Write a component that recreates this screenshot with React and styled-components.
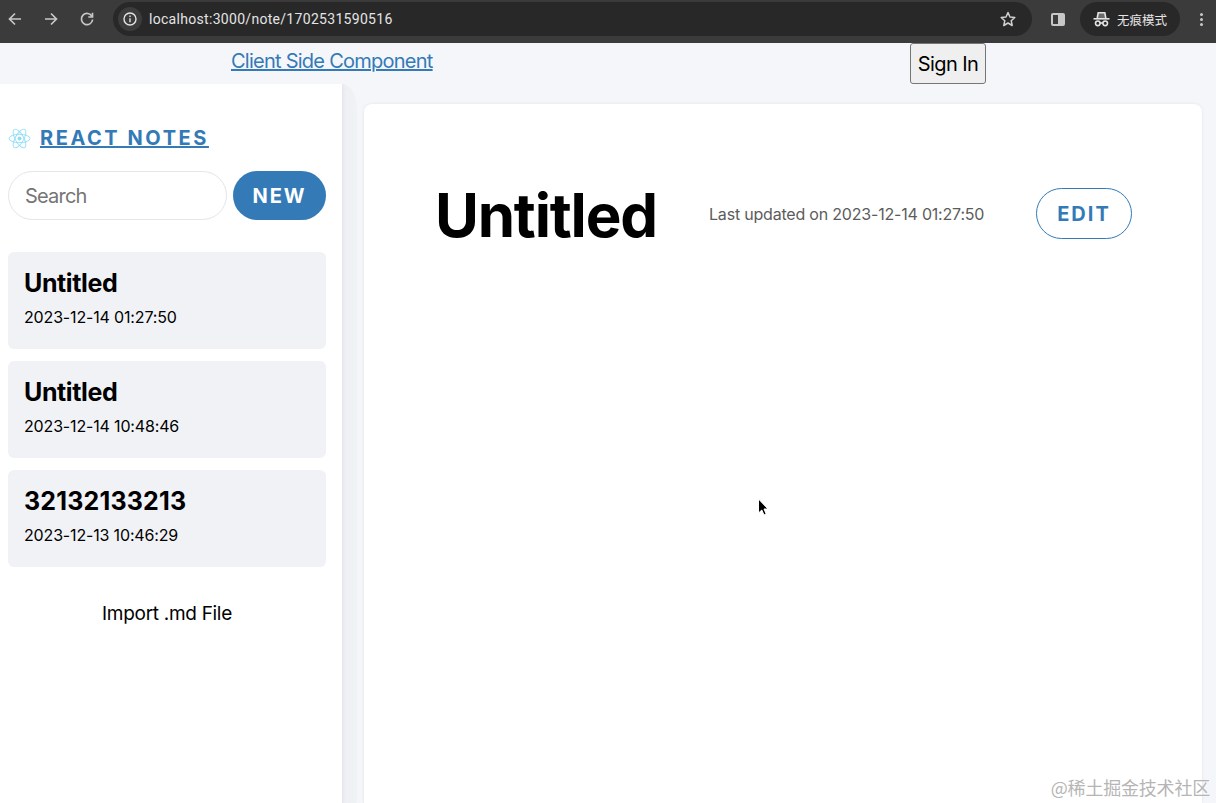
import React from 'react'
import styled, { createGlobalStyle } from 'styled-components'

const GlobalStyle = createGlobalStyle`
    html, body {
        margin: 0;
        height: 100%;
        overflow: hidden;
        background: #f5f6fa;
        font-family: Inter, "Noto Sans CJK SC", sans-serif;
    }
    * { box-sizing: border-box; }
`

const Page = styled.div`
    position: relative;
    width: 1216px;
    height: 803px;
    overflow: hidden;
    display: flex;
    flex-direction: column;
`

const BrowserBar = styled.div`
    height: 43px;
    flex: none;
    background: #3b3b3b;
    display: flex;
    align-items: center;
    padding: 0 0 5px 5px;
`

const NavButton = styled.button`
    width: 20px;
    height: 20px;
    margin-right: ${p => p.$gap || 16}px;
    padding: 0;
    border: none;
    background: none;
    color: #c7c7c7;
    display: flex;
    align-items: center;
    justify-content: center;
`

const Omnibox = styled.div`
    width: 919px;
    height: 34px;
    margin-left: 4px;
    background: #282828;
    border-radius: 17px;
    display: flex;
    align-items: center;
    padding: 0 16px 0 5px;
    color: #e4e4e4;
`

const InfoBadge = styled.span`
    width: 24px;
    height: 24px;
    margin-right: 7px;
    border-radius: 50%;
    background: #3c3c3c;
    display: flex;
    align-items: center;
    justify-content: center;
`

const Url = styled.span`
    flex: 1;
    font-family: Roboto, Inter, sans-serif;
    font-size: 14px;
    letter-spacing: 0.3px;
`

const PanelIcon = styled.span`
    width: 14px;
    height: 13px;
    margin-left: 19px;
    border: 2px solid #c7c7c7;
    border-radius: 2px;
    background: linear-gradient(to right, transparent 50%, #c7c7c7 50%);
`

const IncognitoPill = styled.div`
    width: 100px;
    height: 34px;
    margin-left: 15px;
    background: #282828;
    border-radius: 17px;
    display: flex;
    align-items: center;
    gap: 7px;
    padding-left: 13px;
    color: #e4e4e4;
    font-family: "Noto Sans CJK SC", sans-serif;
    font-size: 12.5px;
`

const MenuDots = styled.span`
    width: 3px;
    height: 3px;
    margin-left: 20px;
    border-radius: 50%;
    background: #c7c7c7;
    box-shadow: 0 -5px 0 #c7c7c7, 0 5px 0 #c7c7c7;
`

const Header = styled.div`
    height: 41px;
    flex: none;
    display: flex;
    align-items: flex-start;
    padding-left: 231px;
`

const HeaderLink = styled.a`
    width: 679px;
    margin-top: 5px;
    font-size: 20px;
    line-height: 26px;
    letter-spacing: -0.75px;
    color: #337ab7;
    text-decoration: underline;
`

const SignIn = styled.button`
    width: 76px;
    height: 41px;
    padding: 0;
    border: 1px solid #767676;
    border-radius: 3px;
    background: #efefef;
    color: #000;
    font-family: Inter, sans-serif;
    font-size: 20px;
    letter-spacing: -0.6px;
`

const Main = styled.div`
    flex: 1;
    min-height: 0;
    display: flex;
`

const Sidebar = styled.aside`
    position: relative;
    width: 342px;
    flex: none;
    background: #fff;
    padding: 42px 16px 0 8px;
    display: flex;
    flex-direction: column;
    &::after {
        content: "";
        position: absolute;
        left: 100%;
        top: 0;
        bottom: 0;
        width: 15px;
        background: linear-gradient(to right, #e6e7ec, #eff0f4 25%, #f1f2f6);
        border-top-right-radius: 100% 24px;
    }
`

const Brand = styled.div`
    height: 24px;
    display: flex;
    align-items: center;
    gap: 9px;
    margin-bottom: 21px;
`

const BrandLink = styled.a`
    font-size: 20px;
    font-weight: 700;
    letter-spacing: 2.55px;
    line-height: 24px;
    color: #337ab7;
    text-decoration: underline;
`

const SearchRow = styled.div`
    display: flex;
    gap: 6px;
    margin-bottom: 32px;
`

const SearchInput = styled.input`
    width: 219px;
    height: 49px;
    padding: 1px 16px 0;
    border: 1px solid #e4e5ea;
    border-radius: 25px;
    outline: none;
    background: #fff;
    font-family: Inter, sans-serif;
    font-size: 20px;
    letter-spacing: -0.8px;
    &::placeholder { color: #757575; opacity: 1; }
`

const NewButton = styled.button`
    width: 93px;
    height: 49px;
    padding: 0;
    border: none;
    border-radius: 25px;
    background: #337ab7;
    color: #fff;
    font-family: Inter, sans-serif;
    font-size: 20px;
    font-weight: 700;
    letter-spacing: 2px;
`

const NoteList = styled.div`
    display: flex;
    flex-direction: column;
    gap: 12px;
`

const NoteCard = styled.div`
    height: 97px;
    padding: 16px 16px 0;
    border-radius: 6px;
    background: #f1f2f6;
`

const NoteTitle = styled.div`
    font-size: 25px;
    font-weight: 700;
    line-height: 30px;
    letter-spacing: ${p => (p.$digits ? '0.18px' : '-0.4px')};
    color: #000;
`

const NoteDate = styled.div`
    margin-top: 9px;
    font-size: 16px;
    line-height: 20px;
    letter-spacing: -0.16px;
    color: #000;
`

const ImportLabel = styled.div`
    margin-top: 35px;
    text-align: center;
    font-size: 19px;
    line-height: 24px;
    letter-spacing: -0.3px;
    color: #000;
`

const NotePane = styled.main`
    position: relative;
    z-index: 1;
    flex: 1;
    margin: 20px 14px 0 22px;
    padding: 84px 70px 0 71px;
    background: #fff;
    border-radius: 8px 8px 0 0;
    box-shadow: 0 0 3px #dfe1e8;
`

const NoteHeader = styled.div`
    display: flex;
    align-items: center;
    justify-content: space-between;
    height: 51px;
`

const BigTitle = styled.h1`
    width: 274px;
    margin: 2px 0 0;
    font-size: 60px;
    font-weight: 700;
    line-height: 56px;
    letter-spacing: -1.2px;
    color: #000;
`

const UpdatedAt = styled.div`
    flex: 1;
    font-size: 16px;
    letter-spacing: -0.2px;
    color: #5c5c5c;
`

const EditButton = styled.button`
    width: 96px;
    height: 51px;
    padding: 0;
    border: 1px solid #337ab7;
    border-radius: 26px;
    background: #fff;
    color: #337ab7;
    font-family: Inter, sans-serif;
    font-size: 20px;
    font-weight: 700;
    letter-spacing: 2px;
`

const Cursor = styled.svg`
    position: absolute;
    z-index: 2;
    left: 757px;
    top: 498px;
`

const Watermark = styled.div`
    position: absolute;
    z-index: 2;
    right: 6px;
    top: 775px;
    font-family: "Noto Sans CJK SC", sans-serif;
    font-size: 18px;
    line-height: 24px;
    letter-spacing: -0.2px;
    color: #b5b5b5;
`

const ArrowIcon = ({ flip }) => (
    <svg width="16" height="16" viewBox="0 0 16 16" fill="none" stroke="currentColor" strokeWidth="1.7" style={flip ? { transform: 'scaleX(-1)' } : undefined}>
        <path d="M14 8H2.5M8 2.5 2.5 8 8 13.5" />
    </svg>
)

const notes = [
    { title: 'Untitled', date: '2023-12-14 01:27:50' },
    { title: 'Untitled', date: '2023-12-14 10:48:46' },
    { title: '32132133213', date: '2023-12-13 10:46:29', digits: true },
]

export default function App() {
    return (
        <Page>
            <GlobalStyle />
            <BrowserBar>
                <NavButton><ArrowIcon /></NavButton>
                <NavButton><ArrowIcon flip /></NavButton>
                <NavButton $gap={12}>
                    <svg width="16" height="16" viewBox="0 0 16 16" fill="none" stroke="currentColor" strokeWidth="1.7">
                        <path d="M13 5.5A5.6 5.6 0 1 0 13.6 8.5" />
                        <path d="M13.5 1.8v4.2H9.3" />
                    </svg>
                </NavButton>
                <Omnibox>
                    <InfoBadge>
                        <svg width="14" height="14" viewBox="0 0 14 14" fill="none" stroke="#e4e4e4" strokeWidth="1.4">
                            <circle cx="7" cy="7" r="6" />
                            <path d="M7 6.2v4M7 3.6v1.4" />
                        </svg>
                    </InfoBadge>
                    <Url>localhost:3000/note/1702531590516</Url>
                    <svg width="16" height="16" viewBox="0 0 16 16" fill="none" stroke="#d0d0d0" strokeWidth="1.5" strokeLinejoin="round">
                        <path d="M8 1.5 10 6l4.8.5-3.600 3.200 1 4.800L8 12l-4.200 2.500 1-4.800L1.200 6.500 6 6Z" />
                    </svg>
                </Omnibox>
                <PanelIcon />
                <IncognitoPill>
                    <svg width="17" height="16" viewBox="0 0 17 16" fill="none" stroke="#e4e4e4" strokeWidth="1.6">
                        <path d="M0.500 7.800h16" />
                        <path d="M4.200 7 5.200 1.800h6.600L12.800 7" fill="#e4e4e4" fillOpacity="0.35" />
                        <circle cx="4.800" cy="12.300" r="2.300" />
                        <circle cx="12.200" cy="12.300" r="2.300" />
                        <path d="M7 12h3" />
                    </svg>
                    无痕模式
                </IncognitoPill>
                <MenuDots />
            </BrowserBar>
            <Header>
                <HeaderLink href="#">Client Side Component</HeaderLink>
                <SignIn>Sign In</SignIn>
            </Header>
            <Main>
                <Sidebar>
                    <Brand>
                        <svg width="23" height="21" viewBox="0 0 23 21" fill="none" stroke="#8fdcf7" strokeWidth="0.9">
                            <circle cx="11.500" cy="10.500" r="2" fill="#8fdcf7" stroke="none" />
                            <ellipse cx="11.500" cy="10.500" rx="10.500" ry="4.200" />
                            <ellipse cx="11.500" cy="10.500" rx="10.500" ry="4.200" transform="rotate(60 11.500 10.500)" />
                            <ellipse cx="11.500" cy="10.500" rx="10.500" ry="4.200" transform="rotate(120 11.500 10.500)" />
                        </svg>
                        <BrandLink href="#">REACT NOTES</BrandLink>
                    </Brand>
                    <SearchRow>
                        <SearchInput placeholder="Search" />
                        <NewButton>NEW</NewButton>
                    </SearchRow>
                    <NoteList>
                        {notes.map((note, i) => (
                            <NoteCard key={i}>
                                <NoteTitle $digits={note.digits}>{note.title}</NoteTitle>
                                <NoteDate>{note.date}</NoteDate>
                            </NoteCard>
                        ))}
                    </NoteList>
                    <ImportLabel>Import .md File</ImportLabel>
                </Sidebar>
                <NotePane>
                    <NoteHeader>
                        <BigTitle>Untitled</BigTitle>
                        <UpdatedAt>Last updated on 2023-12-14 01:27:50</UpdatedAt>
                        <EditButton>EDIT</EditButton>
                    </NoteHeader>
                </NotePane>
            </Main>
            <Cursor width="13" height="19" viewBox="0 0 13 19">
                <path d="M1.500 1v14l3.300-3 2.200 5 2.200-1-2.200-5H11Z" fill="#000" stroke="#fff" strokeWidth="1" />
            </Cursor>
            <Watermark>@稀土掘金技术社区</Watermark>
        </Page>
    )
}
